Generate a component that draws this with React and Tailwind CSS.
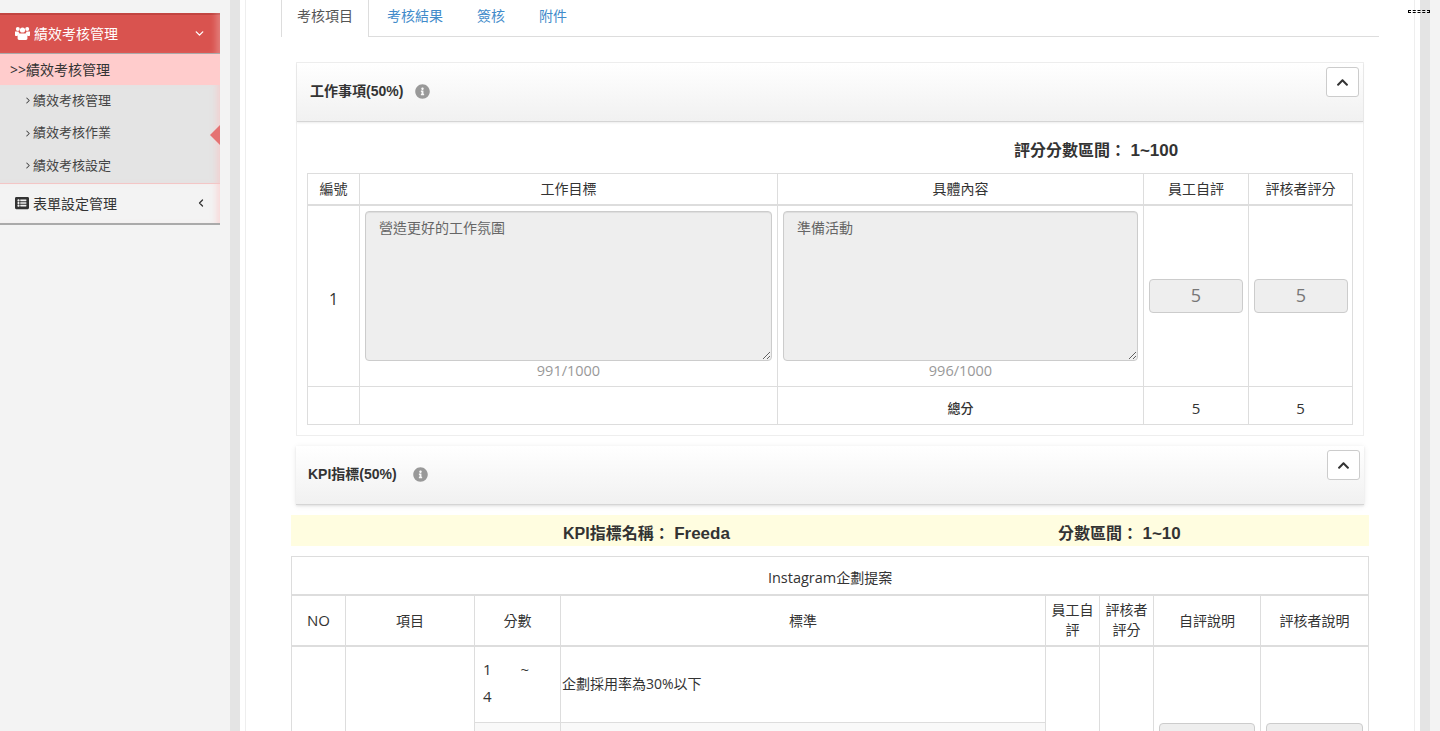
import React from 'react';
import { FaListAlt, FaChevronUp, FaInfoCircle } from 'react-icons/fa';
import { ChevronDown, ChevronLeft, ChevronRight } from 'lucide-react';

const subItems = ['績效考核管理', '績效考核作業', '績效考核設定'];
const cell = 'border border-[#ddd] text-center align-middle';
const boldFont = "font-['Liberation_Sans','Noto_Sans_CJK_TC',sans-serif] font-bold";
const colon = '\uFF1A';

function UsersIcon() {
  return (
    <svg viewBox="0 0 15 13" className="mr-[4px] h-[13px] w-[15px]" fill="currentColor">
      <circle cx="2.8" cy="2" r="2" />
      <circle cx="12.2" cy="2" r="2" />
      <circle cx="7.5" cy="3" r="2.6" />
      <path d="M0 4.6h3.4c.3 1 .8 1.6 1.3 2C3.4 7 2.8 8 2.6 9H.8C.3 9 0 8.6 0 8.2z" />
      <path d="M15 4.6h-3.4c-.3 1-.8 1.6-1.3 2 1.3.4 1.9 1.4 2.1 2.4h1.8c.5 0 .8-.4.8-.8z" />
      <path d="M4.6 6.6h5.8c1.2 0 2 1 2 2.4v2.6c0 .8-.6 1.4-1.4 1.4H4c-.8 0-1.4-.6-1.4-1.4V9c0-1.4.8-2.4 2-2.4z" />
    </svg>
  );
}

function Sidebar() {
  return (
    <aside className="relative w-[220px] shrink-0 pt-[13px] text-[#333]">
      <div className="flex h-[41px] items-center border-b border-[#aaa] bg-[#d9534f] pl-[15px] pr-[14px] text-[14px] text-white shadow-[inset_-7px_0_6px_-3px_rgba(255,255,255,0.25),inset_0_2px_0_#c0403c]">
        <UsersIcon />
        <span className="flex-1">績效考核管理</span>
        <ChevronDown size={13} strokeWidth={2.5} />
      </div>
      <div className="h-[31px] bg-[#ffcccc] pl-[10px] text-[14px] leading-[31px]">&gt;&gt;績效考核管理</div>
      <div className="border-b border-[#f3c6c6] bg-[#e4e4e4] shadow-[inset_-7px_0_6px_-4px_rgba(255,190,190,0.5)]">
        {subItems.map((item) => (
          <div key={item} className="flex h-[32.5px] items-center pb-[1.5px] pl-[23px] text-[13px] text-[#444]">
            <ChevronRight size={11} strokeWidth={2.5} className="w-[10px]" />
            {item}
          </div>
        ))}
      </div>
      <div className="flex h-[41px] items-center border-b-2 border-[#aaa] pl-[15px] pr-[13px] text-[14px] shadow-[inset_-7px_0_6px_-4px_rgba(255,190,190,0.5)]">
        <FaListAlt className="mr-[4px] text-[14px]" />
        <span className="flex-1">表單設定管理</span>
        <ChevronLeft size={12} strokeWidth={2.5} />
      </div>
      {/* active item pointer */}
      <div className="absolute right-0 top-[125px] h-0 w-0 border-y-[10px] border-r-[10px] border-y-transparent border-r-[#e57373]" />
    </aside>
  );
}

function PanelHead({ title, left, iconGap }) {
  return (
    <div className="flex h-[59px] items-start justify-between border-b border-[#d5d5d5] bg-gradient-to-b from-white to-[#f1f1f1] pr-[4px] shadow-[0_1px_2px_rgba(0,0,0,0.08)]">
      <div className={`flex h-full items-center pb-[2px] text-[14px] text-[#333] ${boldFont} ${left}`}>
        {title}
        <FaInfoCircle className={`text-[15px] text-[#999] ${iconGap}`} />
      </div>
      <button className="mt-[4px] flex h-[30px] w-[33px] items-center justify-center rounded-[3px] border border-[#ccc] bg-white text-[#333]">
        <FaChevronUp className="text-[13px]" />
      </button>
    </div>
  );
}

function WorkTable() {
  return (
    <table className="w-full table-fixed border-collapse text-[14px] text-[#333]">
      <colgroup>
        <col className="w-[52px]" />
        <col className="w-[418px]" />
        <col className="w-[366px]" />
        <col className="w-[105px]" />
        <col className="w-[104px]" />
      </colgroup>
      <thead>
        <tr className="h-[31px] border-b-2 border-[#ddd]">
          {['編號', '工作目標', '具體內容', '員工自評', '評核者評分'].map((h) => (
            <th key={h} className={`${cell} font-normal`}>{h}</th>
          ))}
        </tr>
      </thead>
      <tbody>
        <tr className="h-[182px]">
          <td className={`${cell} pt-[6px] text-[16px]`}>1</td>
          {[['營造更好的工作氛圍', '991/1000'], ['準備活動', '996/1000']].map(([text, count]) => (
            <td key={count} className="border border-[#ddd] px-[5px] pt-[5px] text-center align-top">
              <textarea
                readOnly
                value={text}
                className="block h-[150px] w-full resize rounded-[4px] border border-[#ccc] bg-[#eee] px-[13px] py-[5px] text-[14px] text-[#666] shadow-[inset_0_1px_1px_rgba(0,0,0,0.075)]"
              />
              <div className="h-[19px] text-[14.5px] leading-[19px] text-[#999]">{count}</div>
            </td>
          ))}
          {[0, 1].map((i) => (
            <td key={i} className={`${cell} px-[5px]`}>
              <div className="mx-auto flex h-[34px] w-[94px] items-center justify-center rounded-[4px] border border-[#ccc] bg-[#eee] text-[18px] text-[#777]">5</div>
            </td>
          ))}
        </tr>
        <tr className="h-[38px]">
          <td className={cell} />
          <td className={cell} />
          <td className={`${cell} pt-[6px] text-[13px] font-medium`}>總分</td>
          <td className={`${cell} pt-[6px] text-[15px]`}>5</td>
          <td className={`${cell} pt-[6px] text-[15px]`}>5</td>
        </tr>
      </tbody>
    </table>
  );
}

function KpiTable() {
  return (
    <table className="w-full table-fixed border-collapse text-[14px] text-[#333]">
      <colgroup>
        <col className="w-[54px]" />
        <col className="w-[129px]" />
        <col className="w-[86px]" />
        <col className="w-[485px]" />
        <col className="w-[54px]" />
        <col className="w-[54px]" />
        <col className="w-[107px]" />
        <col className="w-[108px]" />
      </colgroup>
      <thead>
        <tr className="h-[38px] border-b-2 border-[#ddd]">
          <th colSpan={8} className={`${cell} pt-[5px] font-normal`}><span className="text-[14.5px]">Instagram</span>企劃提案</th>
        </tr>
        <tr className="h-[51px] border-b-2 border-[#ddd]">
          <th className={`${cell} text-[15px] font-normal`}>NO</th>
          <th className={`${cell} font-normal`}>項目</th>
          <th className={`${cell} font-normal`}>分數</th>
          <th className={`${cell} font-normal`}>標準</th>
          <th className={`${cell} leading-[20px] font-normal`}>員工自評</th>
          <th className={`${cell} leading-[20px] font-normal`}>評核者評分</th>
          <th className={`${cell} font-normal`}>自評說明</th>
          <th className={`${cell} font-normal`}>評核者說明</th>
        </tr>
      </thead>
      <tbody>
        <tr className="h-[77px]">
          <td rowSpan={2} className={cell} />
          <td rowSpan={2} className={cell} />
          <td className="border border-[#ddd] px-[8px] pb-[2px] align-middle text-[15px] leading-[27px]">
            <div className="flex justify-between pr-[23px]"><span>1</span><span>~</span></div>
            <div>4</div>
          </td>
          <td className="border border-[#ddd] pb-[2px] pl-[1px] align-middle">企劃採用率為30%以下</td>
          <td rowSpan={2} className={cell} />
          <td rowSpan={2} className={cell} />
          {[0, 1].map((i) => (
            <td key={i} rowSpan={2} className={`${cell} px-[5px]`}>
              <div className="h-[34px] rounded-[4px] border border-[#ccc] bg-[#eee]" />
            </td>
          ))}
        </tr>
        <tr className="h-[111px] bg-[#f9f9f9]">
          <td className="border border-[#ddd]" />
          <td className="border border-[#ddd]" />
        </tr>
      </tbody>
    </table>
  );
}

export default function App() {
  return (
    <div className="relative flex h-[731px] overflow-hidden bg-[#f3f3f3] font-['Open_Sans','Noto_Sans_CJK_TC',sans-serif]">
      <Sidebar />
      <div className="ml-[10px] h-full w-[1200px] border-x-[10px] border-[#e4e4e4] bg-white">
        <div className="mx-[5px] h-full border-x border-[#eee] px-[35px]">
          <nav className="flex h-[37px] border-b border-[#ddd] text-[14px]">
            <div className="h-[37px] w-[88px] border-x border-[#ddd] bg-white pl-[15px] leading-[31px] text-[#555]">考核項目</div>
            <div className="pl-[18px] leading-[31px] text-[#428bca]">考核結果</div>
            <div className="pl-[34px] leading-[31px] text-[#428bca]">簽核</div>
            <div className="pl-[34px] leading-[31px] text-[#428bca]">附件</div>
          </nav>

          <section className="mx-[15px] mt-[25px] border border-[#eee]">
            <PanelHead title="工作事項(50%)" left="pl-[13px]" iconGap="ml-[12px]" />
            <div className="px-[10px] pb-[10px]">
              <div className={`h-[51px] pl-[707px] pt-[18px] text-[16px] leading-[22px] text-[#333] ${boldFont}`}>評分分數區間{colon} <span className="text-[17px]">1~100</span></div>
              <WorkTable />
            </div>
          </section>

          <section className="mx-[15px] mt-[10px] shadow-[0_1px_6px_rgba(0,0,0,0.08)]">
            <PanelHead title="KPI指標(50%)" left="pl-[12px]" iconGap="ml-[16px]" />
          </section>

          <div className={`mx-[10px] mt-[10px] flex h-[31px] items-center bg-[#fffde0] pl-[272px] pt-[6px] text-[16px] text-[#333] ${boldFont}`}>
            <span className="w-[495px]">KPI指標名稱{colon} <span className="text-[17px]">Freeda</span></span>
            <span>分數區間{colon} <span className="text-[17px]">1~10</span></span>
          </div>

          <div className="mx-[10px] mt-[10px]">
            <KpiTable />
          </div>
        </div>
      </div>
      {/* stray dashed mark in the top corner */}
      <div className="absolute left-[1408px] top-[10px] h-[3px] w-[22px] border border-dashed border-black" />
    </div>
  );
}
